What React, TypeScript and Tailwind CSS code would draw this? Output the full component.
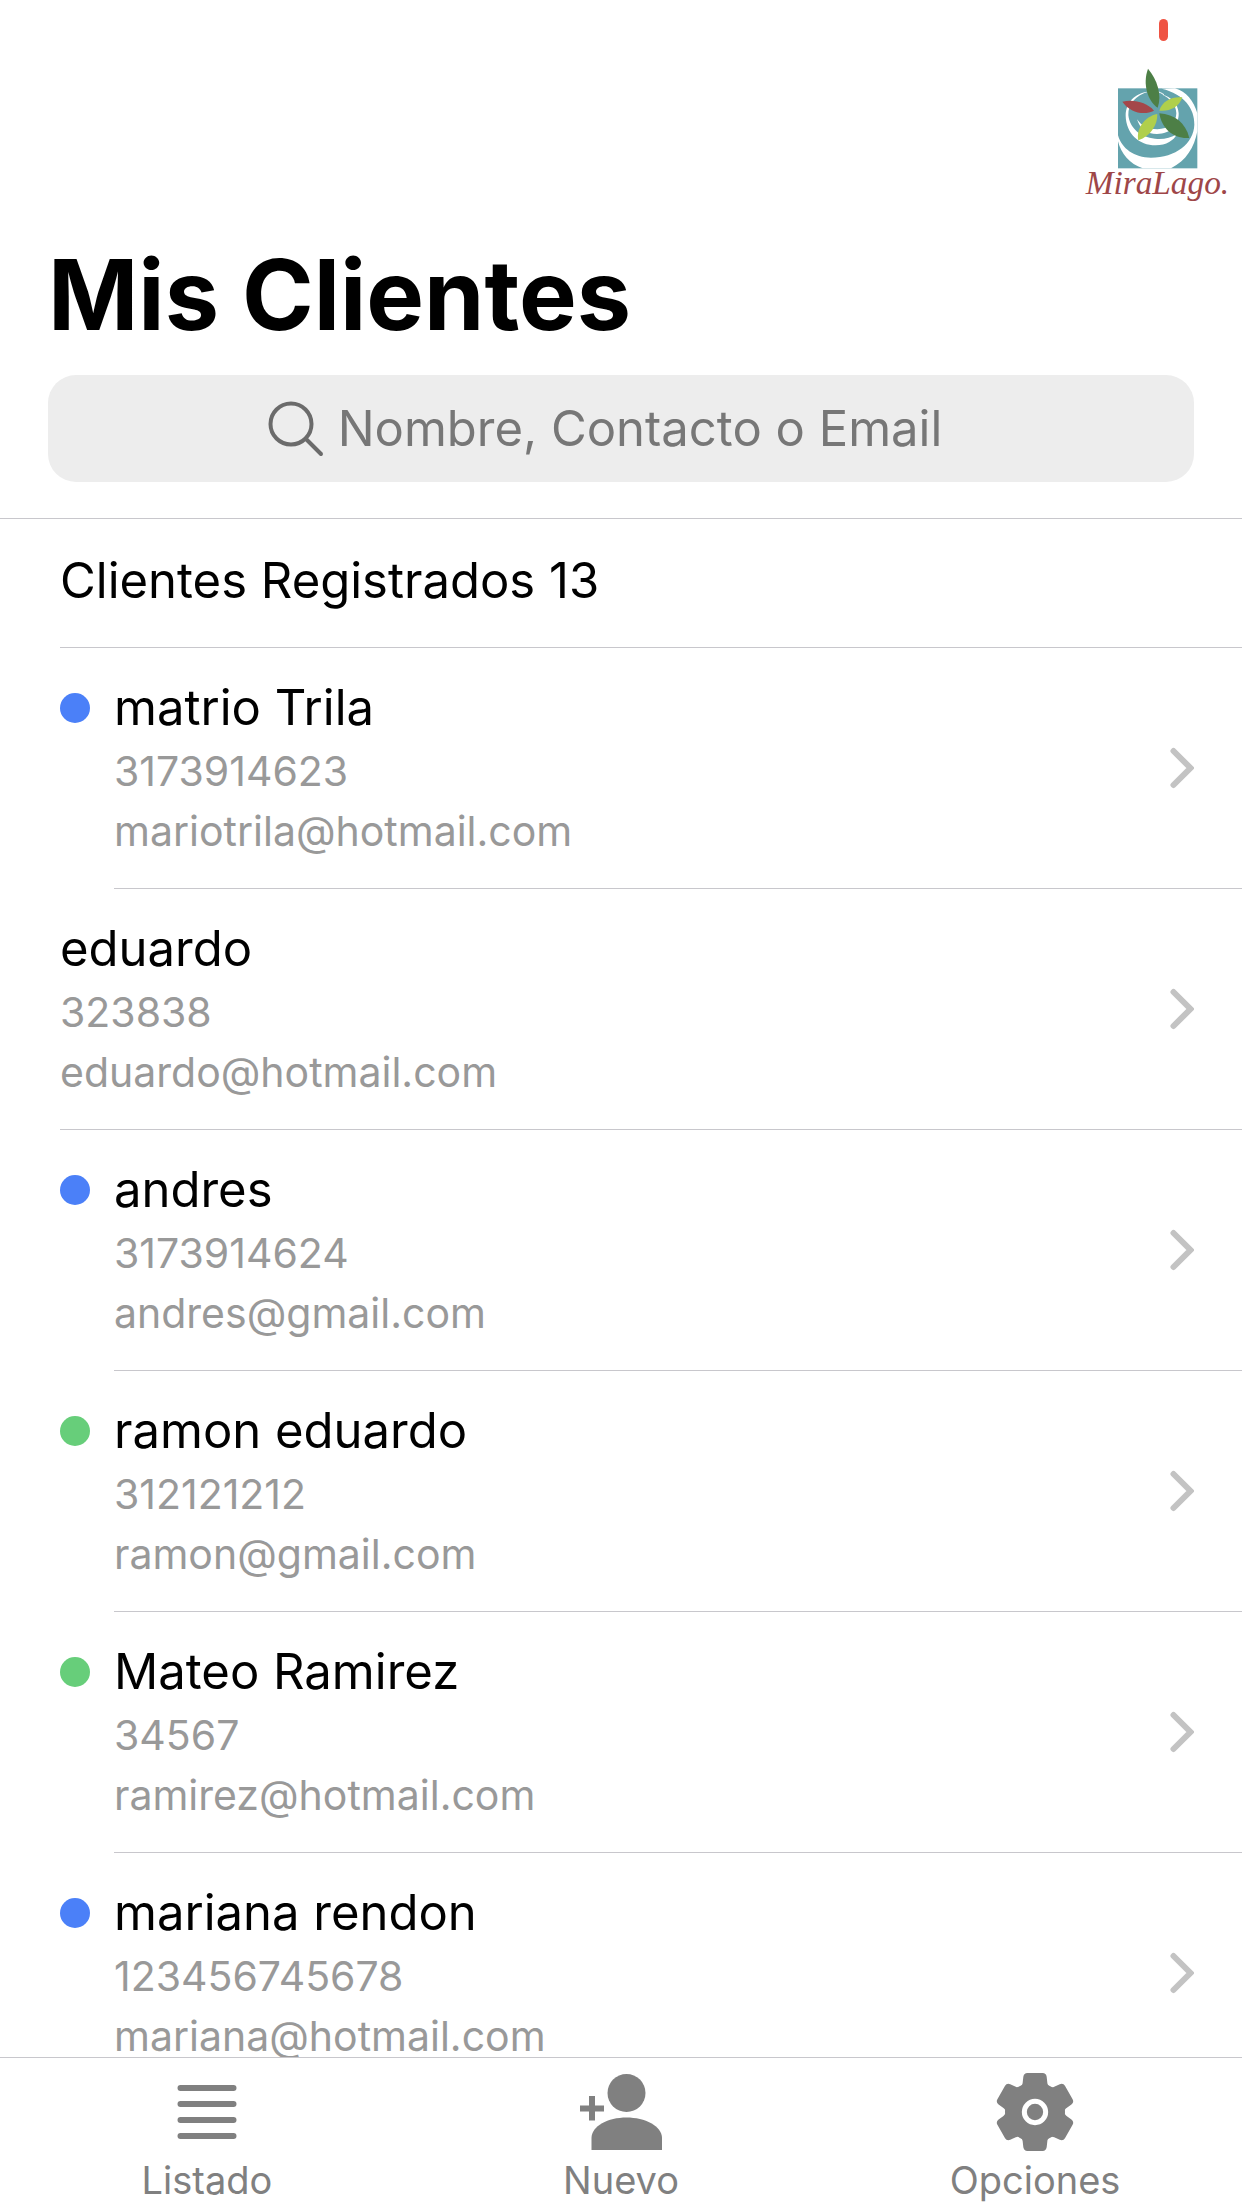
import { ReactNode, useState } from 'react'

interface Cliente {
  nombre: string
  telefono: string
  email: string
  estado?: 'azul' | 'verde'
}

const clientes: Cliente[] = [
  { nombre: 'matrio Trila', telefono: '3173914623', email: 'mariotrila@hotmail.com', estado: 'azul' },
  { nombre: 'eduardo', telefono: '323838', email: 'eduardo@hotmail.com' },
  { nombre: 'andres', telefono: '3173914624', email: 'andres@gmail.com', estado: 'azul' },
  { nombre: 'ramon eduardo', telefono: '312121212', email: 'ramon@gmail.com', estado: 'verde' },
  { nombre: 'Mateo Ramirez', telefono: '34567', email: 'ramirez@hotmail.com', estado: 'verde' },
  { nombre: 'mariana rendon', telefono: '123456745678', email: 'mariana@hotmail.com', estado: 'azul' },
]

const TOTAL_REGISTRADOS = 13

function Logo() {
  return (
    <svg className="w-[150px] h-[150px]" viewBox="40 200 450 450" role="img" aria-label="MiraLago">
      <rect x="145" y="267" width="238" height="240" fill="#64a3ad" />
      {/* Water rings */}
      <g fill="#fff">
        <path d="M145 408 C156 448 194 475 244 475 C318 475 372 432 374 376 C375 328 344 284 276 268 L316 267 C350 277 372 304 383 342 L383 396 C374 444 350 484 304 507 L219 507 C180 494 154 462 145 426 Z" />
        <path d="M236 277 C196 281 168 309 168 349 C169 402 208 438 258 438 C290 438 313 423 322 404 C302 416 280 421 256 418 C212 414 180 386 176 347 C175 312 199 288 236 277 Z" />
        <path d="M202 360 C211 388 230 404 262 404 C303 403 328 378 327 342 C325 313 305 293 276 285 C302 298 319 316 320 342 C320 370 296 389 263 390 C236 390 216 380 202 360 Z" />
      </g>
      <path d="M236 277 C252 272 268 276 283 286" fill="none" stroke="#fff" strokeWidth="3" />
      {/* Leaves */}
      <path d="M235 208 C262 240 278 286 264 325 C234 305 218 254 235 208 Z" fill="#4d7f46" />
      <path d="M158 307 C192 299 232 309 253 334 C222 350 180 339 158 307 Z" fill="#a4474a" />
      <path d="M269 334 C277 305 306 291 338 294 C328 324 300 337 269 334 Z" fill="#b0cf4c" />
      <path d="M263 344 C264 377 242 411 206 423 C198 391 224 351 263 344 Z" fill="#b0cf4c" />
      <path d="M269 342 C315 345 348 371 359 416 C313 420 276 389 269 342 Z" fill="#4d7f46" />
      <text
        x="48"
        y="584"
        fontSize="100"
        fill="#9e4648"
        className="font-['Liberation_Serif',serif] italic"
      >
        MiraLago.
      </text>
    </svg>
  )
}

function SearchIcon() {
  return (
    <svg
      className="w-14 h-14 shrink-0"
      viewBox="0 0 56 56"
      fill="none"
      stroke="#6b6b6b"
      strokeWidth="4"
      strokeLinecap="round"
      aria-hidden="true"
    >
      <circle cx="23" cy="23" r="20.5" />
      <path d="M38 38l15 15" />
    </svg>
  )
}

function ChevronIcon() {
  return (
    <svg
      className="w-6 h-11 shrink-0"
      viewBox="0 0 24 44"
      fill="none"
      stroke="#c3c3c3"
      strokeWidth="6"
      strokeLinecap="round"
      aria-hidden="true"
    >
      <path d="M3.5 5l17 17-17 17" />
    </svg>
  )
}

function ListIcon() {
  return (
    <svg className="w-20 h-20" viewBox="0 0 80 80" stroke="currentColor" strokeWidth="6" strokeLinecap="round" aria-hidden="true">
      <path d="M13.500 16h53M13.500 32h53M13.500 48h53M13.500 64h53" />
    </svg>
  )
}

function AddPersonIcon() {
  return (
    <svg className="w-[84px] h-20" viewBox="0 0 84 80" fill="currentColor" aria-hidden="true">
      <circle cx="47.500" cy="21" r="19" />
      <path d="M12.500 78V66C12.500 54 29 45.500 47.500 45.500S83 54 83 66v12z" />
      <path d="M10 24h6v9.500h9v6h-9v9h-6v-9H1v-6h9z" />
    </svg>
  )
}

function GearIcon() {
  return (
    <svg className="w-20 h-20" viewBox="-120 -120 240 240" fill="currentColor" aria-hidden="true">
      <circle r="90" />
      {[0, 60, 120, 180, 240, 300].map((angle) => (
        <path
          key={angle}
          transform={`rotate(${angle})`}
          d="M-54 -70C-42 -76 -38 -80 -37 -88L-35 -106Q-33 -117 -23 -117H23Q33 -117 35 -106L37 -88C38 -80 42 -76 54 -70Z"
        />
      ))}
      <circle r="32" fill="none" stroke="#fff" strokeWidth="15" />
    </svg>
  )
}

function ClienteRow({ cliente }: { cliente: Cliente }) {
  return (
    <li className="flex pl-[60px]">
      {cliente.estado && (
        <span
          className={`mt-[45px] mr-6 size-[30px] shrink-0 rounded-full ${
            cliente.estado === 'azul' ? 'bg-[#4b80f8]' : 'bg-[#67ce7a]'
          }`}
        />
      )}
      <a href="#" className="flex flex-1 min-w-0 items-center border-b border-[#c8c7cc] pt-[27px] pb-[27px] pr-12">
        <div className="flex-1 min-w-0">
          <h2 className="text-[49px] leading-[66px] text-black">{cliente.nombre}</h2>
          <p className="text-[41px] leading-[60px] text-[#999999]">{cliente.telefono}</p>
          <p className="text-[41px] leading-[60px] text-[#999999]">{cliente.email}</p>
        </div>
        <ChevronIcon />
      </a>
    </li>
  )
}

function TabButton({ label, icon }: { label: string; icon: ReactNode }) {
  return (
    <button type="button" className="flex flex-1 flex-col items-center pt-3.5 text-[#808080]">
      {icon}
      <span className="pt-px text-[38px] leading-[55px]">{label}</span>
    </button>
  )
}

export default function App() {
  const [busqueda, setBusqueda] = useState('')

  const filtrados = clientes.filter((c) =>
    `${c.nombre} ${c.email}`.toLowerCase().includes(busqueda.toLowerCase())
  )

  return (
    <div className="flex h-screen flex-col overflow-hidden bg-white font-['Inter',sans-serif]">
      <header className="shrink-0 border-b border-[#c8c7cc] px-12 pb-9">
        <div className="-mr-12 flex h-[234px] flex-col items-end pr-[9px]">
          <span className="mt-[19px] mr-[65px] mb-[25px] h-[22px] w-[9px] rounded-full bg-[#ef5343]" />
          <Logo />
        </div>
        <h1 className="text-[97px] leading-[122px] font-bold text-black">Mis Clientes</h1>
        <label className="mt-[19px] flex h-[107px] items-center justify-center gap-3.5 rounded-[28px] bg-[#ededed] pr-8">
          <SearchIcon />
          <input
            type="search"
            aria-label="Buscar cliente"
            placeholder="Nombre, Contacto o Email"
            value={busqueda}
            onChange={(e) => setBusqueda(e.target.value)}
            className="field-sizing-content bg-transparent text-[49px] leading-[66px] text-black outline-none placeholder:text-[#777777]"
          />
        </label>
      </header>

      <main className="min-h-0 flex-1 overflow-hidden">
        <p className="ml-[60px] border-b border-[#c8c7cc] pt-[29px] pb-[33px] text-[49px] leading-[66px] text-black">
          Clientes Registrados {TOTAL_REGISTRADOS}
        </p>
        <ul>
          {filtrados.map((c) => (
            <ClienteRow key={c.email} cliente={c} />
          ))}
        </ul>
      </main>

      <nav className="flex shrink-0 border-t border-[#c8c7cc] bg-white">
        <TabButton label="Listado" icon={<ListIcon />} />
        <TabButton label="Nuevo" icon={<AddPersonIcon />} />
        <TabButton label="Opciones" icon={<GearIcon />} />
      </nav>
    </div>
  )
}
